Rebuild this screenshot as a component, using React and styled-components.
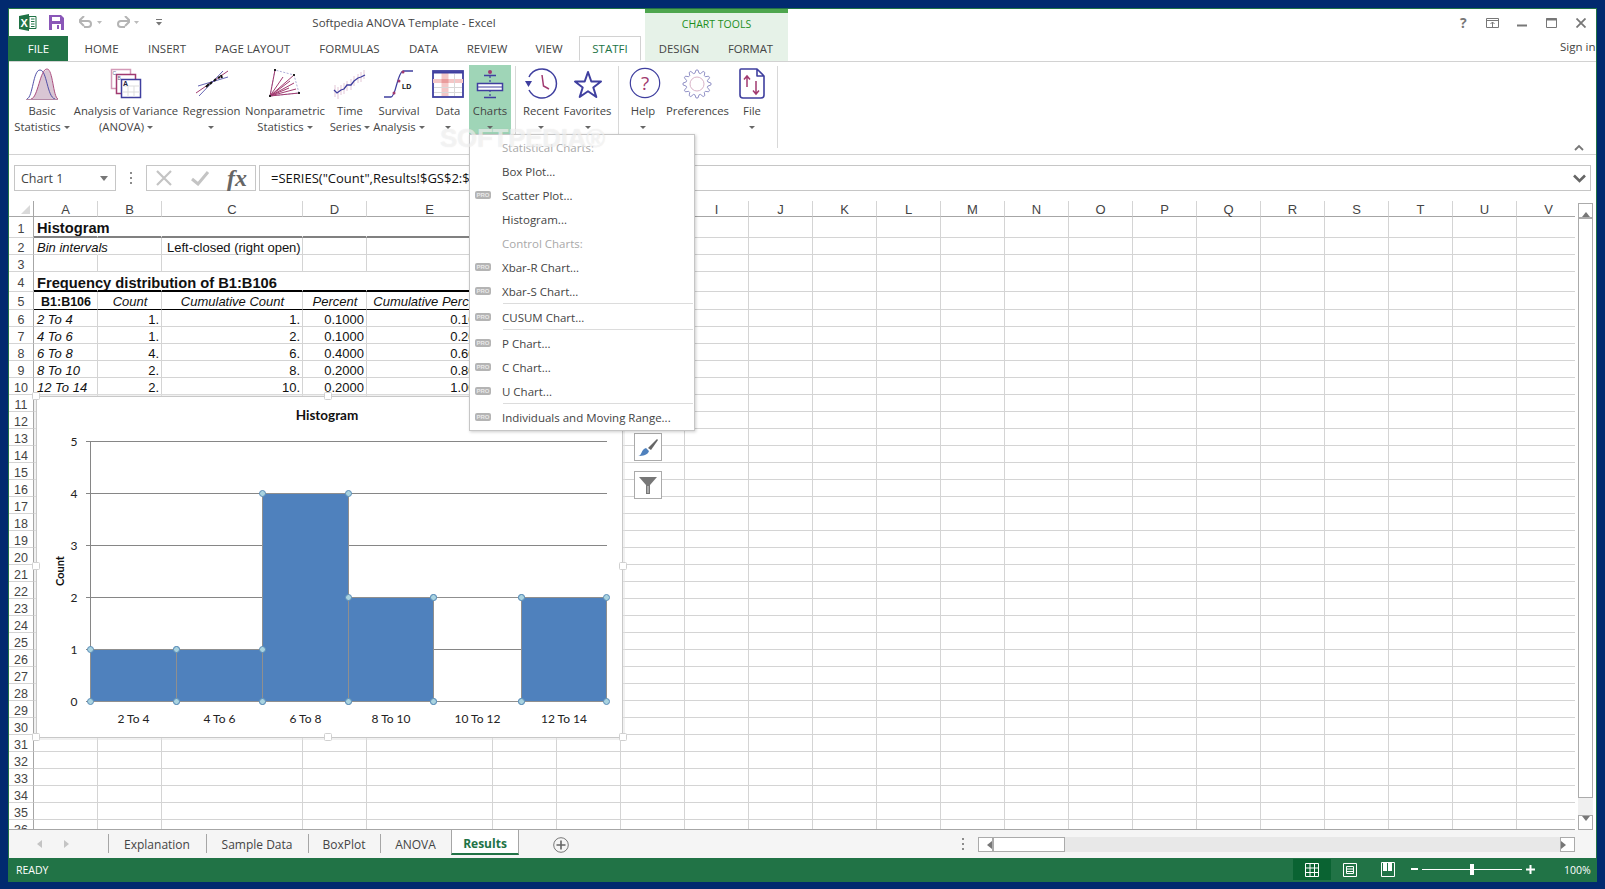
import React from "react";
import styled, { createGlobalStyle } from "styled-components";

const UI_FONT = `"Open Sans", "Noto Sans", sans-serif`;
const CELL_FONT = `"Liberation Sans", Arial, sans-serif`;
const BLUE = "#3f3f9f";
const MAGENTA = "#a13a70";
const GREEN = "#217346";
const GRID = "#d4d4d4";

const GlobalStyle = createGlobalStyle`
	html, body {
		margin: 0;
		background: #012a6f;
		overflow: hidden;
	}
	* {
		box-sizing: border-box;
	}
`;

const Page = styled.div`
	position: relative;
	width: 1605px;
	height: 889px;
	padding: 8px;
	font-family: ${UI_FONT};
`;

const Window = styled.div`
	position: relative;
	width: 1589px;
	height: 874px;
	border: 1px solid ${GREEN};
	background: #fff;
	display: flex;
	flex-direction: column;
	overflow: hidden;
`;

/* ---------- title bar and tabs ---------- */

const Header = styled.header`
	display: flex;
	height: 53px;
	border-bottom: 1px solid #d2d2d2;
`;

const HeaderLeft = styled.div`
	width: 636px;
	display: flex;
	flex-direction: column;
`;

const TitleRow = styled.div`
	height: 28px;
	display: flex;
	align-items: center;
	padding-left: 10px;
`;

const Qat = styled.div`
	width: 290px;
	display: flex;
	align-items: center;
`;

const WindowTitle = styled.div`
	width: 190px;
	text-align: center;
	font-size: 11.5px;
	color: #444;
	white-space: nowrap;
`;

const TabRow = styled.nav`
	height: 25px;
	display: flex;
`;

const RibbonTab = styled.div`
	width: ${(p) => p.$w}px;
	height: ${(p) => (p.$active || p.$file ? 25 : 24)}px;
	display: flex;
	align-items: center;
	justify-content: center;
	font-size: 11.5px;
	white-space: nowrap;
	color: ${(p) => (p.$file ? "#fff" : p.$active ? GREEN : "#444")};
	background: ${(p) => (p.$file ? GREEN : "#fff")};
	margin-left: ${(p) => (p.$active ? 1 : 0)}px;
	border: ${(p) => (p.$active ? "1px solid #d2d2d2" : "none")};
	border-bottom: ${(p) => (p.$active ? "1px solid #fff" : "none")};
	position: relative;
	z-index: 1;
`;

const ChartTools = styled.div`
	width: 143px;
	height: 52px;
	background: #e6f2e8;
	border-top: 4px solid #4ea64e;
	display: flex;
	flex-direction: column;
`;

const ChartToolsTitle = styled.div`
	height: 22px;
	display: flex;
	align-items: center;
	justify-content: center;
	font-size: 10.5px;
	color: #1d8f1d;
`;

const ChartToolsTabs = styled.div`
	flex: 1;
	display: flex;
`;

const ToolTab = styled.div`
	width: ${(p) => p.$w}px;
	display: flex;
	align-items: center;
	justify-content: center;
	font-size: 11.3px;
	color: #444;
`;

const HeaderRight = styled.div`
	flex: 1;
	display: flex;
	flex-direction: column;
	align-items: flex-end;
	overflow: hidden;
`;

const WinControls = styled.div`
	height: 28px;
	display: flex;
	align-items: center;
`;

const WinButton = styled.div`
	width: 29.5px;
	display: flex;
	align-items: center;
	justify-content: center;
	font-size: 14px;
	font-weight: 700;
	color: #777;
`;

const SignIn = styled.div`
	width: 36px;
	height: 25px;
	line-height: 22px;
	font-size: 11.5px;
	color: #444;
	white-space: nowrap;
	overflow: hidden;
`;

/* ---------- ribbon ---------- */

const Ribbon = styled.section`
	height: 93px;
	border-bottom: 1px solid #d2d2d2;
	display: flex;
	padding-left: 5px;
`;

const RibbonItem = styled.div`
	width: ${(p) => p.$w}px;
	height: 72px;
	margin-top: 3px;
	padding-top: 3px;
	display: flex;
	flex-direction: column;
	align-items: center;
	background: ${(p) => (p.$on ? "#9fd5b7" : "transparent")};
`;

const IconBox = styled.div`
	height: 35px;
	width: 32px;
	flex: none;
`;

const ItemLabel = styled.div`
	font-size: 11.3px;
	line-height: 16px;
	color: #444;
	text-align: center;
	white-space: nowrap;
`;

const LabelLine = styled.div`
	height: 16px;
	display: flex;
	align-items: center;
	justify-content: center;
`;

const Caret = styled.i`
	display: inline-block;
	width: 0;
	height: 0;
	margin-left: ${(p) => (p.$solo ? 0 : 3)}px;
	border-left: 3px solid transparent;
	border-right: 3px solid transparent;
	border-top: 3.500px solid #666;
`;

const RibbonSep = styled.div`
	width: 1px;
	height: 82px;
	margin: 4px ${(p) => p.$right}px 0 ${(p) => p.$left}px;
	background: #d8d8d8;
`;

const Collapse = styled.div`
	margin-left: auto;
	margin-right: 8px;
	align-self: flex-end;
	height: 20px;
	width: 14px;
`;

/* ---------- formula bar ---------- */

const FormulaRow = styled.div`
	height: 46px;
	display: flex;
	align-items: flex-start;
	padding: 10px 5px 0 5px;
`;

const NameBox = styled.div`
	width: 102px;
	height: 26px;
	border: 1px solid #c6c6c6;
	display: flex;
	align-items: center;
	justify-content: space-between;
	padding: 0 7px 0 6px;
	font-size: 12.5px;
	color: #444;
`;

const NameArrow = styled.i`
	width: 0;
	height: 0;
	border-left: 4px solid transparent;
	border-right: 4px solid transparent;
	border-top: 5px solid #777;
`;

const Grip = styled.div`
	width: 30px;
	height: 26px;
	display: flex;
	flex-direction: column;
	align-items: center;
	justify-content: center;
	gap: 3px;
`;

const GripDot = styled.i`
	width: 2px;
	height: 2px;
	background: #8c8c8c;
`;

const FxBox = styled.div`
	width: 110px;
	height: 26px;
	border: 1px solid #c6c6c6;
	display: flex;
	align-items: center;
	justify-content: space-between;
	padding: 0 8px;
	margin-right: 3px;
`;

const FxLabel = styled.span`
	font-family: "Liberation Serif", serif;
	font-style: italic;
	font-weight: 700;
	font-size: 24px;
	color: #666;
`;

const FormulaInput = styled.div`
	flex: 1;
	height: 26px;
	border: 1px solid #c6c6c6;
	display: flex;
	align-items: center;
	justify-content: space-between;
	padding: 0 4px 0 11px;
	font-size: 13px;
	color: #111;
	white-space: nowrap;
`;

/* ---------- sheet ---------- */

const SheetArea = styled.div`
	position: relative;
	height: 629px;
	display: flex;
`;

const SheetGrid = styled.div`
	width: 1566px;
	height: 629px;
	overflow: hidden;
	border-bottom: 1px solid #a6a6a6;
`;

const COLUMNS = "25px 64px 64px 141px 64px 126px repeat(17, 64px)";

const ColHeaderRow = styled.div`
	display: grid;
	grid-template-columns: ${COLUMNS};
	grid-template-rows: 16px;
	height: 16px;
`;

const Corner = styled.div`
	border-right: 1px solid #a6a6a6;
	border-bottom: 1px solid #a6a6a6;
	display: flex;
	justify-content: flex-end;
	align-items: flex-end;
	padding: 0 3px 2px 0;
`;

const CornerMark = styled.i`
	width: 9px;
	height: 9px;
	background: #d9d9d9;
	clip-path: polygon(100% 0, 100% 100%, 0 100%);
`;

const ColHeader = styled.div`
	border-right: 1px solid ${GRID};
	border-bottom: 1px solid #a6a6a6;
	text-align: center;
	font-family: ${CELL_FONT};
	font-size: 13px;
	line-height: 17px;
	color: #444;
`;

const SheetRow = styled.div`
	display: grid;
	grid-template-columns: ${COLUMNS};
	grid-template-rows: ${(p) => p.$h}px;
	height: ${(p) => p.$h}px;
`;

const RowHeader = styled.div`
	border-right: 1px solid #a6a6a6;
	border-bottom: 1px solid ${GRID};
	text-align: center;
	font-family: ${CELL_FONT};
	font-size: 12.5px;
	line-height: ${(p) => p.$h + 3}px;
	color: #444;
`;

const UNDER = {
	gray: "2px solid #808080",
	heavy: "2px solid #000",
	thin: "1px solid #000",
};

const Cell = styled.div`
	min-width: 0;
	padding: 0 2px 0 ${(p) => p.$pad || 3}px;
	border-right: 1px solid ${(p) => (p.$open ? "transparent" : GRID)};
	border-bottom: ${(p) => UNDER[p.$under] || `1px solid ${GRID}`};
	font-family: ${CELL_FONT};
	font-size: ${(p) => p.$size || 13}px;
	font-weight: ${(p) => (p.$bold ? 700 : 400)};
	font-style: ${(p) => (p.$italic ? "italic" : "normal")};
	text-align: ${(p) => p.$align || "left"};
	line-height: ${(p) => p.$h + 2}px;
	color: #111;
	white-space: nowrap;
`;

const VScroll = styled.div`
	width: 21px;
	height: 629px;
	padding: 2px 3px 0 3px;
	display: flex;
	flex-direction: column;
	align-items: stretch;
`;

const ScrollTrack = styled.div`
	flex: 1;
	display: flex;
	flex-direction: column;
	background: #f0f0f0;
`;

const ScrollBtn = styled.div`
	width: ${(p) => p.$w || 15}px;
	height: ${(p) => p.$h || 15}px;
	flex: none;
	background: #fff;
	border: 1px solid #ababab;
	display: flex;
	align-items: center;
	justify-content: center;
`;

const Thumb = styled.div`
	height: ${(p) => p.$h}px;
	flex: none;
	background: #fff;
	border: 1px solid #ababab;
`;

const Spacer = styled.div`
	flex: 1;
`;

const Tri = styled.i`
	width: 0;
	height: 0;
	border: 4px solid transparent;
	${(p) => `border-${p.$side}: 5px solid ${p.$color || "#777"};`}
	${(p) => `margin-${p.$side}: -4px;`}
`;

/* ---------- overlays ---------- */

const ChartFrame = styled.svg`
	position: absolute;
	left: 26px;
	top: 193px;
	overflow: visible;
`;

const ChartSideBtn = styled.div`
	position: absolute;
	left: 625px;
	top: ${(p) => p.$top}px;
	width: 28px;
	height: 28px;
	background: #fff;
	border: 1px solid #ababab;
	display: flex;
	align-items: center;
	justify-content: center;
`;

const Menu = styled.div`
	position: absolute;
	left: 469px;
	top: 134px;
	width: 226px;
	height: 297px;
	background: #fff;
	border: 1px solid #c6c6c6;
	box-shadow: 1px 1px 3px rgba(0, 0, 0, 0.2);
	z-index: 5;
	font-size: 11.5px;
`;

const MenuItem = styled.div`
	height: 24px;
	display: flex;
	align-items: center;
	color: ${(p) => (p.$off ? "#a9a9a9" : "#444")};
	white-space: nowrap;
`;

const BadgeSlot = styled.div`
	width: 32px;
	flex: none;
	padding-left: 5px;
`;

const ProBadge = styled.span`
	display: block;
	width: 16px;
	height: 8px;
	line-height: 8px;
	border-radius: 2px;
	background: #b4b4b4;
	color: #e8e8e8;
	font-family: ${CELL_FONT};
	font-size: 6px;
	font-weight: 700;
	text-align: center;
`;

const MenuSep = styled.div`
	height: 2px;
	margin-left: 33px;
	margin-right: 1px;
	border-top: 1px solid #dcdcdc;
`;

const Watermark = styled.div`
	position: absolute;
	left: 440px;
	top: 123px;
	z-index: 6;
	font-family: ${CELL_FONT};
	font-size: 26px;
	font-weight: 700;
	letter-spacing: -0.3px;
	color: rgba(255, 255, 255, 0.5);
	text-shadow: 0 0 1px rgba(190, 190, 190, 0.4);
	pointer-events: none;
`;

/* ---------- sheet tabs ---------- */

const TabBar = styled.div`
	height: 28px;
	background: #f5f5f5;
	display: flex;
	align-items: flex-start;
	padding-right: 21px;
`;

const TabNav = styled.div`
	width: 99px;
	height: 28px;
	display: flex;
	align-items: center;
	padding-left: 24px;
	gap: 30px;
`;

const SheetTab = styled.div`
	position: relative;
	width: ${(p) => p.$w}px;
	height: 25px;
	padding-top: 3px;
	display: flex;
	align-items: center;
	justify-content: center;
	font-size: 12px;
	color: #444;
	white-space: nowrap;
	${(p) =>
		p.$active
			? `background:#fff;color:${GREEN};font-weight:700;border:1px solid #a6a6a6;border-top:none;border-bottom:2px solid ${GREEN};`
			: ""}
	${(p) =>
		p.$divider
			? `&::before{content:"";position:absolute;left:0;top:4px;height:19px;width:1px;background:#a6a6a6;}`
			: ""}
`;

const AddSheet = styled.div`
	margin: 6px 0 0 34px;
	width: 16px;
	height: 16px;
`;

const TabGrip = styled.div`
	margin: 0 14px 0 auto;
	height: 28px;
	display: flex;
	flex-direction: column;
	justify-content: center;
	gap: 3px;
`;

const HScroll = styled.div`
	margin-top: 7px;
	width: 597px;
	height: 15px;
	display: flex;
	background: #e8e8e8;
`;

/* ---------- status bar ---------- */

const StatusBar = styled.footer`
	height: 23px;
	background: ${GREEN};
	display: flex;
	align-items: center;
	padding-left: 7px;
	color: #fff;
	font-size: 10.5px;
`;

const StatusViews = styled.div`
	margin-left: auto;
	display: flex;
	align-items: center;
`;

const ViewBtn = styled.div`
	width: 38px;
	height: 21px;
	display: flex;
	align-items: center;
	justify-content: center;
	background: ${(p) => (p.$on ? "#0a6332" : "transparent")};
`;

const Zoomer = styled.div`
	display: flex;
	align-items: center;
	margin-left: 4px;
	gap: 4px;
`;

const SliderTrack = styled.div`
	position: relative;
	width: 100px;
	height: 1px;
	background: #fff;
`;

const SliderThumb = styled.i`
	position: absolute;
	left: 48px;
	top: -5px;
	width: 4px;
	height: 11px;
	background: #fff;
`;

const ZoomText = styled.div`
	width: 45px;
	padding-left: 13px;
	margin-left: 16px;
	white-space: nowrap;
`;

/* ---------- drawn icons ---------- */

const XlIcon = () => (
	<svg width="18" height="17" viewBox="0 0 18 17">
		<path d="M0 2 L10 0 V17 L0 15 Z" fill="#1f7244" />
		<path d="M10 2.5 H17 V14.5 H10 Z" fill="#fff" stroke="#1f7244" />
		<path d="M12 5 H15.5 M12 7.5 H15.5 M12 10 H15.5 M12 12.5 H15.5" stroke="#1f7244" />
		<text x="1.5" y="13" fontFamily="Liberation Sans" fontWeight="700" fontSize="11" fill="#fff">X</text>
	</svg>
);

const SaveIcon = () => (
	<svg width="15" height="15" viewBox="0 0 15 15" style={{ marginLeft: 12 }}>
		<path d="M0 0 H12 L15 3 V15 H0 Z" fill="#8a57b8" />
		<rect x="3" y="2" width="8" height="4" fill="#fff" />
		<rect x="3" y="9" width="9" height="6" fill="#fff" />
		<rect x="8" y="10" width="2" height="4" fill="#8a57b8" />
	</svg>
);

const UndoIcon = ({ flip }) => (
	<svg width="14" height="13" viewBox="0 0 14 13" style={{ transform: flip ? "scaleX(-1)" : "none", marginLeft: flip ? 14 : 15 }}>
		<path d="M1 5 H9 C13 5 13 11 9 11 H5" fill="none" stroke="#b4b4b4" strokeWidth="2" />
		<path d="M5 0 L0 5 L5 10" fill="none" stroke="#b4b4b4" strokeWidth="2" />
	</svg>
);

const TinyCaret = () => (
	<svg width="5" height="3" viewBox="0 0 5 3" style={{ marginLeft: 4 }}>
		<path d="M0 0 H5 L2.5 3 Z" fill="#bbb" />
	</svg>
);

const CustomizeIcon = () => (
	<svg width="6" height="7" viewBox="0 0 6 7" style={{ marginLeft: 17 }}>
		<path d="M0 0.500 H6" stroke="#777" />
		<path d="M0 3 H6 L3 6.500 Z" fill="#777" />
	</svg>
);

const IconSvg = ({ children, nudge }) => (
	<svg width="32" height="32" viewBox="0 0 32 32" style={{ overflow: "visible", marginLeft: nudge || 0 }}>
		{children}
	</svg>
);

const BasicIcon = () => (
	<IconSvg>
		<path d="M5 31 C12 30 14 2 21 2 C27 2 27 29 32 31 Z" fill="#d9c6d4" />
		<path d="M1 31 C7 29 7 2 14 2 C21 2 21 29 29 31" fill="none" stroke={BLUE} strokeWidth="0.900" />
		<path d="M5 31 C12 30 14 1 21 1 C27 1 27 29 32 31" fill="none" stroke={MAGENTA} strokeWidth="0.900" />
		<path d="M0 31.500 H32" stroke="#b48aa6" />
	</IconSvg>
);

const SheetsIcon = () => (
	<IconSvg>
		<rect x="1.500" y="1.500" width="19" height="19" fill="#fff" stroke="#d49ab8" strokeWidth="1.500" />
		<rect x="6.500" y="6.500" width="19" height="19" fill="#fff" stroke={MAGENTA} strokeWidth="1.500" />
		<rect x="11.500" y="11.500" width="19" height="18" fill="#fff" stroke={BLUE} strokeWidth="1.500" />
		<path d="M12 18 H30 M12 24 H30 M18 18 V29 M24 18 V29" stroke="#ddd" />
		<text x="13" y="18" fontFamily="Liberation Sans" fontWeight="700" fontSize="7" fill="#224">A</text>
		<text x="2.500" y="7" fontFamily="Liberation Sans" fontSize="5" fill="#668">C</text>
		<text x="7.500" y="12" fontFamily="Liberation Sans" fontSize="5" fill="#668">B</text>
	</IconSvg>
);

const RegressionIcon = () => (
	<IconSvg>
		<path d="M0 25 L32 3" stroke={MAGENTA} />
		<path d="M2 18 L32 9 M3 28 L27 3" stroke={BLUE} strokeWidth="0.800" />
		<path d="M10 19 L13 16 M14 16 L16 14 M18 13 L20 11 M22 10 L24 9 M25 7 L26 10" stroke="#111" strokeWidth="2" />
	</IconSvg>
);

const NonparamIcon = () => (
	<IconSvg>
		<path d="M1 28 L6 2 L25 7 L30 25 Z" fill="none" stroke="#8c8cc8" strokeWidth="0.700" strokeDasharray="2 1.500" />
		<path d="M1 28 L6 2 M1 28 L25 7 M1 28 L21 13 M1 28 L25 15 M1 28 L30 25 M1 28 L20 20 M1 28 L14 9 M1 28 L27 21" fill="none" stroke={MAGENTA} strokeWidth="1" />
		<path d="M5 1 h2 v2 h-2 Z M24 6 h2 v2 h-2 Z M29 24 h2 v2 h-2 Z M0 27 h2 v2 h-2 Z" fill="#222" />
	</IconSvg>
);

const TimeIcon = () => (
	<IconSvg>
		<path d="M1 17 V29 M4 19 V31 M7 17 V27 M10 15 V26 M13 13 V23 M17 11 V22 M20 8 V18 M24 6 V15 M27 4 V14 M30 2 V11" stroke="#e3c6d6" />
		<path d="M0 22 L3 25 L7 22 L10 21 L13 17 L17 17 L20 13 L24 10 L27 9 L31 7" fill="none" stroke={BLUE} strokeWidth="1.300" />
	</IconSvg>
);

const SurvivalIcon = () => (
	<IconSvg>
		<path d="M1 29 H8 C13 29 14 5 20 3 H30" fill="none" stroke={BLUE} strokeWidth="1.300" />
		<circle cx="11" cy="25" r="1.500" fill={MAGENTA} />
		<circle cx="16" cy="13" r="1.500" fill={MAGENTA} />
		<circle cx="20" cy="4" r="1.500" fill={MAGENTA} />
		<text x="19" y="21" fontFamily="Liberation Sans" fontWeight="700" fontSize="7" fill="#111">LD</text>
	</IconSvg>
);

const DataIcon = () => (
	<IconSvg>
		<rect x="1" y="3" width="30" height="26" fill="#fff" stroke={BLUE} strokeWidth="1.800" />
		<rect x="1" y="11" width="30" height="4" fill="#f4c7c7" />
		<rect x="9.500" y="5" width="7" height="23" fill="#f4c7c7" />
		<rect x="9.500" y="11" width="7" height="4" fill="#ea9c9c" />
		<path d="M2 19.500 H30 M2 24.500 H30 M22.500 6 V28" stroke="#d8d8d8" />
		<path d="M1 4.500 H31" stroke={BLUE} strokeWidth="2" />
	</IconSvg>
);

const ChartsIcon = () => (
	<IconSvg>
		<circle cx="16" cy="4" r="2" fill={MAGENTA} />
		<path d="M10 7.500 H22 M10 29.500 H22" stroke={BLUE} strokeWidth="1.500" />
		<path d="M16 8 V15 M16 22 V29" stroke={BLUE} strokeWidth="1.200" strokeDasharray="2 2" />
		<rect x="3.500" y="15.500" width="25" height="7" fill="#fff" stroke={BLUE} strokeWidth="1.500" />
		<path d="M4 19 H28" stroke={BLUE} strokeWidth="1" />
	</IconSvg>
);

const RecentIcon = () => (
	<IconSvg nudge={1}>
		<path d="M3 9 A14.500 14.500 0 1 1 3 22" fill="none" stroke={BLUE} strokeWidth="1.500" />
		<path d="M-1 13 H6 L2.500 19 Z" fill={BLUE} />
		<path d="M16 7 L17.500 18 L23 21" fill="none" stroke={MAGENTA} strokeWidth="1.500" />
	</IconSvg>
);

const StarIcon = () => (
	<IconSvg>
		<path d="M16 4 L19.300 13.500 L29 13.500 L21.300 19.500 L24.300 29 L16 23.300 L7.700 29 L10.700 19.500 L3 13.500 L12.700 13.500 Z" fill="#fff" stroke={BLUE} strokeWidth="2" strokeLinejoin="round" />
	</IconSvg>
);

const HelpIcon = () => (
	<IconSvg nudge={2}>
		<circle cx="16" cy="15" r="14.700" fill="#fff" stroke={BLUE} strokeWidth="1.200" />
		<text x="16" y="22" textAnchor="middle" fontFamily="Open Sans" fontSize="19" fill={MAGENTA}>?</text>
	</IconSvg>
);

const gearPoints = Array.from({ length: 48 }, (_, i) => {
	const step = i % 4;
	const r = step < 2 ? 14 : 11;
	const a = ((i - 0.5) * Math.PI * 2) / 48;
	return `${(16 + r * Math.cos(a)).toFixed(1)},${(16 + r * Math.sin(a)).toFixed(1)}`;
}).join(" ");

const GearIcon = () => (
	<IconSvg nudge={-1}>
		<polygon points={gearPoints} fill="#fff" stroke="#7676b8" strokeWidth="0.800" />
		<circle cx="16" cy="16" r="7" fill="#fff" stroke="#d9b4c8" />
	</IconSvg>
);

const FileIcon = () => (
	<IconSvg>
		<path d="M5 1 H21 L28 8 V27 Q28 30 25 30 H7 Q4 30 4 27 V2 Q4 1 5 1 Z M21 1 V8 H28" fill="#fff" stroke={BLUE} strokeWidth="1.600" strokeLinejoin="round" />
		<path d="M11 8 V19 M8 11.500 L11 8 L14 11.500" fill="none" stroke={MAGENTA} strokeWidth="1.500" />
		<path d="M20 13 V26 M17 22.500 L20 26 L23 22.500" fill="none" stroke={MAGENTA} strokeWidth="1.500" />
	</IconSvg>
);

const ribbonItems = [
	{ key: "basic", w: 56, icon: <BasicIcon />, lines: ["Basic", "Statistics"] },
	{ key: "anova", w: 112, icon: <SheetsIcon />, lines: ["Analysis of Variance", "(ANOVA)"] },
	{ key: "regr", w: 59, icon: <RegressionIcon />, lines: ["Regression", ""] },
	{ key: "nonp", w: 88, icon: <NonparamIcon />, lines: ["Nonparametric", "Statistics"] },
	{ key: "time", w: 42, icon: <TimeIcon />, lines: ["Time", "Series"] },
	{ key: "surv", w: 56, icon: <SurvivalIcon />, lines: ["Survival", "Analysis"] },
	{ key: "data", w: 42, icon: <DataIcon />, lines: ["Data", ""] },
	{ key: "charts", w: 42, icon: <ChartsIcon />, lines: ["Charts", ""], on: true },
	{ sep: [4, 4] },
	{ key: "recent", w: 42, icon: <RecentIcon />, lines: ["Recent", ""] },
	{ key: "fav", w: 51, icon: <StarIcon />, lines: ["Favorites", ""] },
	{ sep: [5, 4] },
	{ key: "help", w: 40, icon: <HelpIcon />, lines: ["Help", ""] },
	{ key: "prefs", w: 69, icon: <GearIcon />, lines: ["Preferences"], noCaret: true },
	{ key: "file", w: 40, icon: <FileIcon />, lines: ["File", ""] },
	{ sep: [5, 0] },
];

const tabs = [
	{ name: "HOME", w: 67 },
	{ name: "INSERT", w: 64 },
	{ name: "PAGE LAYOUT", w: 107 },
	{ name: "FORMULAS", w: 87 },
	{ name: "DATA", w: 61 },
	{ name: "REVIEW", w: 66 },
	{ name: "VIEW", w: 58 },
];

const menuEntries = [
	{ text: "Statistical Charts:", off: true },
	{ text: "Box Plot..." },
	{ text: "Scatter Plot...", pro: true },
	{ text: "Histogram..." },
	{ text: "Control Charts:", off: true },
	{ text: "Xbar-R Chart...", pro: true },
	{ text: "Xbar-S Chart...", pro: true },
	{ sep: true },
	{ text: "CUSUM Chart...", pro: true },
	{ sep: true },
	{ text: "P Chart...", pro: true },
	{ text: "C Chart...", pro: true },
	{ text: "U Chart...", pro: true },
	{ sep: true },
	{ text: "Individuals and Moving Range...", pro: true },
];

const sheetTabs = [
	{ name: "Explanation", w: 98, divider: true },
	{ name: "Sample Data", w: 102, divider: true },
	{ name: "BoxPlot", w: 72, divider: true },
	{ name: "ANOVA", w: 71, divider: true },
	{ name: "Results", w: 68, active: true },
];

const colNames = "ABCDEFGHIJKLMNOPQRSTUV".split("");

const dataRow = (a, b, c, d, e) => ({
	h: 17,
	cells: [
		{ text: a, italic: true },
		{ text: b, align: "right" },
		{ text: c, align: "right" },
		{ text: d, align: "right" },
		{ text: e, align: "right" },
	],
});

const specialRows = {
	1: {
		h: 21,
		cells: [
			{ text: "Histogram", bold: true, size: 14.7, open: true, under: "gray" },
			{ open: true, under: "gray" },
			{ open: true, under: "gray" },
			{ open: true, under: "gray" },
			{ open: true, under: "gray" },
		],
	},
	2: {
		h: 17,
		cells: [{ text: "Bin intervals", italic: true, open: true }, {}, { text: "Left-closed (right open)", pad: 5 }, {}, {}],
	},
	4: {
		h: 20,
		cells: [
			{ text: "Frequency distribution of B1:B106", bold: true, size: 14.7, open: true, under: "heavy" },
			{ open: true, under: "heavy" },
			{ open: true, under: "heavy" },
			{ open: true, under: "heavy" },
			{ under: "heavy" },
		],
	},
	5: {
		h: 18,
		cells: [
			{ text: "B1:B106", bold: true, size: 12.5, align: "center", under: "thin" },
			{ text: "Count", italic: true, align: "center", under: "thin" },
			{ text: "Cumulative Count", italic: true, align: "center", under: "thin" },
			{ text: "Percent", italic: true, align: "center", under: "thin" },
			{ text: "Cumulative Percent", italic: true, align: "center", under: "thin" },
		],
	},
	6: dataRow("2 To 4", "1.", "1.", "0.1000", "0.1000"),
	7: dataRow("4 To 6", "1.", "2.", "0.1000", "0.2000"),
	8: dataRow("6 To 8", "4.", "6.", "0.4000", "0.6000"),
	9: dataRow("8 To 10", "2.", "8.", "0.2000", "0.8000"),
	10: dataRow("12 To 14", "2.", "10.", "0.2000", "1.0000"),
};

const sheetRows = Array.from({ length: 36 }, (_, i) => specialRows[i + 1] || { h: 17, cells: [] });

const axisY = [701.5, 649.5, 597.5, 545.5, 493.5, 441.5];
const bars = [
	{ x0: 90.5, x1: 176.5, top: 649.5, label: "2 To 4" },
	{ x0: 176.5, x1: 262.5, top: 649.5, label: "4 To 6" },
	{ x0: 262.5, x1: 348.5, top: 493.5, label: "6 To 8" },
	{ x0: 348.5, x1: 433.5, top: 597.5, label: "8 To 10" },
	{ x0: 433.5, x1: 521.5, top: 597.5, label: "10 To 12", empty: true },
	{ x0: 521.5, x1: 606.5, top: 597.5, label: "12 To 14" },
];

const FrameHandle = ({ x, y }) => (
	<rect x={x - 3.500} y={y - 3.500} width="7" height="7" rx="1" fill="#fff" stroke="#d0d0d0" />
);

const PointHandle = ({ x, y }) => (
	<circle cx={x} cy={y} r="3" fill="#a9d3e0" stroke="#5b8db8" />
);

// chart is drawn in page coordinates and shifted into its frame
const HistogramChart = () => (
	<ChartFrame width="600" height="350" viewBox="35 394 600 350">
		<rect x="36.500" y="396.500" width="586" height="341" fill="#fff" stroke="#c8c8c8" />
		<rect x="35" y="395" width="589" height="344" fill="none" stroke="#e2e2e2" />
		<text x="327" y="420" textAnchor="middle" fontFamily="Lato" fontWeight="700" fontSize="13.500" fill="#111">Histogram</text>
		<text transform="translate(64 571) rotate(-90)" textAnchor="middle" fontFamily="Lato" fontWeight="700" fontSize="11" fill="#111">Count</text>
		{axisY.map((y, i) => (
			<g key={y}>
				<path d={`M86 ${y} H607`} stroke="#868686" />
				<text x="74" y={y + 4} textAnchor="middle" fontFamily="Lato" fontSize="12" fill="#222">{i}</text>
			</g>
		))}
		<path d="M90.500 441 V702" stroke="#868686" />
		{bars.map((b) => (
			<g key={b.label}>
				<rect x={b.x0} y={b.top} width={b.x1 - b.x0} height={701.5 - b.top} fill={b.empty ? "none" : "#4f81bd"} stroke="#8f8f8f" />
				<text x={(b.x0 + b.x1) / 2} y="723" textAnchor="middle" fontFamily="Lato" fontSize="12" fill="#222">{b.label}</text>
			</g>
		))}
		{bars.map((b) => (
			<g key={b.label + "-pts"}>
				<PointHandle x={b.x0} y={b.top} />
				<PointHandle x={b.x1} y={b.top} />
				<PointHandle x={b.x0} y={701.5} />
				<PointHandle x={b.x1} y={701.5} />
			</g>
		))}
		<FrameHandle x={36} y={396} />
		<FrameHandle x={328} y={396} />
		<FrameHandle x={36} y={566} />
		<FrameHandle x={623} y={566} />
		<FrameHandle x={36} y={737} />
		<FrameHandle x={328} y={737} />
		<FrameHandle x={623} y={737} />
	</ChartFrame>
);

function App() {
	return (
		<Page>
			<GlobalStyle />
			<Window>
				<Header>
					<HeaderLeft>
						<TitleRow>
							<Qat>
								<XlIcon />
								<SaveIcon />
								<UndoIcon />
								<TinyCaret />
								<UndoIcon flip />
								<TinyCaret />
								<CustomizeIcon />
							</Qat>
							<WindowTitle>Softpedia ANOVA Template - Excel</WindowTitle>
						</TitleRow>
						<TabRow>
							<RibbonTab $w={59} $file>FILE</RibbonTab>
							{tabs.map((t) => (
								<RibbonTab key={t.name} $w={t.w}>{t.name}</RibbonTab>
							))}
							<RibbonTab $w={62} $active>STATFI</RibbonTab>
						</TabRow>
					</HeaderLeft>
					<ChartTools>
						<ChartToolsTitle>CHART TOOLS</ChartToolsTitle>
						<ChartToolsTabs>
							<ToolTab $w={68}>DESIGN</ToolTab>
							<ToolTab $w={75}>FORMAT</ToolTab>
						</ChartToolsTabs>
					</ChartTools>
					<HeaderRight>
						<WinControls>
							<WinButton>?</WinButton>
							<WinButton>
								<svg width="13" height="10" viewBox="0 0 13 10">
									<path d="M0.500 0.500 H12.500 V9.500 H0.500 Z M1 2.500 H12" fill="none" stroke="#777" />
									<path d="M6.500 9 V4 M4.500 6 L6.500 4 L8.500 6" fill="none" stroke="#777" />
								</svg>
							</WinButton>
							<WinButton>
								<svg width="10" height="10" viewBox="0 0 10 10">
									<path d="M0 7.500 H10" stroke="#777" strokeWidth="2" />
								</svg>
							</WinButton>
							<WinButton>
								<svg width="11" height="10" viewBox="0 0 11 10">
									<path d="M0.500 0.500 H10.500 V9.500 H0.500 Z" fill="none" stroke="#777" />
									<path d="M0 1.500 H11" stroke="#777" strokeWidth="2" />
								</svg>
							</WinButton>
							<WinButton>
								<svg width="10" height="10" viewBox="0 0 10 10">
									<path d="M0.500 0.500 L9.500 9.500 M9.500 0.500 L0.500 9.500" stroke="#777" strokeWidth="1.800" />
								</svg>
							</WinButton>
						</WinControls>
						<SignIn>Sign in</SignIn>
					</HeaderRight>
				</Header>

				<Ribbon>
					{ribbonItems.map((item, i) =>
						item.sep ? (
							<RibbonSep key={i} $left={item.sep[0]} $right={item.sep[1]} />
						) : (
							<RibbonItem key={item.key} $w={item.w} $on={item.on}>
								<IconBox>{item.icon}</IconBox>
								<ItemLabel>
									{item.lines.map((line, n) => (
										<LabelLine key={n}>
											{line}
											{n === item.lines.length - 1 && !item.noCaret && <Caret $solo={!line} />}
										</LabelLine>
									))}
								</ItemLabel>
							</RibbonItem>
						)
					)}
					<Collapse>
						<svg width="10" height="7" viewBox="0 0 10 7">
							<path d="M1 6 L5 2 L9 6" fill="none" stroke="#777" strokeWidth="1.800" />
						</svg>
					</Collapse>
				</Ribbon>

				<FormulaRow>
					<NameBox>
						Chart 1
						<NameArrow />
					</NameBox>
					<Grip>
						<GripDot />
						<GripDot />
						<GripDot />
					</Grip>
					<FxBox>
						<svg width="18" height="16" viewBox="0 0 18 16">
							<path d="M2 1 L16 15 M16 1 L2 15" stroke="#c4c4c4" strokeWidth="2.200" />
						</svg>
						<svg width="20" height="16" viewBox="0 0 20 16">
							<path d="M2 9 L8 14 L18 2" fill="none" stroke="#c4c4c4" strokeWidth="3" />
						</svg>
						<FxLabel>fx</FxLabel>
					</FxBox>
					<FormulaInput>
						=SERIES("Count",Results!$GS$2:$GS$7,Results!$GT$2:$GT$7,1)
						<svg width="13" height="9" viewBox="0 0 13 9">
							<path d="M1 1.500 L6.500 7 L12 1.500" fill="none" stroke="#666" strokeWidth="2.600" />
						</svg>
					</FormulaInput>
				</FormulaRow>

				<SheetArea>
					<SheetGrid>
						<ColHeaderRow>
							<Corner>
								<CornerMark />
							</Corner>
							{colNames.map((c) => (
								<ColHeader key={c}>{c}</ColHeader>
							))}
						</ColHeaderRow>
						{sheetRows.map((row, r) => (
							<SheetRow key={r} $h={row.h}>
								<RowHeader $h={row.h}>{r + 1}</RowHeader>
								{colNames.map((c, n) => {
									const cell = row.cells[n] || {};
									return (
										<Cell
											key={c}
											$h={row.h}
											$bold={cell.bold}
											$italic={cell.italic}
											$align={cell.align}
											$size={cell.size}
											$open={cell.open}
											$under={cell.under}
											$pad={cell.pad}
										>
											{cell.text}
										</Cell>
									);
								})}
							</SheetRow>
						))}
					</SheetGrid>
					<VScroll>
						<ScrollTrack>
							<ScrollBtn>
								<Tri $side="bottom" />
							</ScrollBtn>
							<Thumb $h={580} />
							<Spacer />
							<ScrollBtn>
								<Tri $side="top" />
							</ScrollBtn>
						</ScrollTrack>
					</VScroll>
					<HistogramChart />
					<ChartSideBtn $top={232}>
						<svg width="22" height="20" viewBox="0 0 22 20">
							<path d="M11 11 L20 2 L21 3 L14 13 Z" fill="#666" />
							<path d="M1 19 C5 19 4 12 9 11 L12 14 C11 18 6 19 1 19 Z" fill="#4f81bd" />
						</svg>
					</ChartSideBtn>
					<ChartSideBtn $top={270}>
						<svg width="20" height="20" viewBox="0 0 20 20">
							<path d="M1 2 H19 L12 10 V19 H8 V10 Z" fill="#777" />
							<path d="M9.500 11 V18 H10.500 V11 Z" fill="#ddd" />
						</svg>
					</ChartSideBtn>
				</SheetArea>

				<TabBar>
					<TabNav>
						<Tri $side="right" $color="#c4c4c4" />
						<Tri $side="left" $color="#c4c4c4" />
					</TabNav>
					{sheetTabs.map((t) => (
						<SheetTab key={t.name} $w={t.w} $active={t.active} $divider={t.divider}>
							{t.name}
						</SheetTab>
					))}
					<AddSheet>
						<svg width="16" height="16" viewBox="0 0 16 16">
							<circle cx="8" cy="8" r="7.300" fill="none" stroke="#777" />
							<path d="M8 3.500 V12.500 M3.500 8 H12.500" stroke="#666" strokeWidth="1.600" />
						</svg>
					</AddSheet>
					<TabGrip>
						<GripDot />
						<GripDot />
						<GripDot />
					</TabGrip>
					<HScroll>
						<ScrollBtn>
							<Tri $side="right" />
						</ScrollBtn>
						<ScrollBtn $w={72} />
						<Spacer />
						<ScrollBtn>
							<Tri $side="left" />
						</ScrollBtn>
					</HScroll>
				</TabBar>

				<StatusBar>
					READY
					<StatusViews>
						<ViewBtn $on>
							<svg width="14" height="14" viewBox="0 0 14 14">
								<path d="M0.500 0.500 H13.500 V13.500 H0.500 Z M0.500 5 H13.500 M0.500 9.500 H13.500 M5 0.500 V13.500 M9.500 0.500 V13.500" fill="none" stroke="#fff" />
							</svg>
						</ViewBtn>
						<ViewBtn>
							<svg width="14" height="14" viewBox="0 0 14 14">
								<path d="M0.500 0.500 H13.500 V13.500 H0.500 Z M3.500 3.500 H10.500 V10.500 H3.500 Z M4 6 H10 M4 8.500 H10" fill="none" stroke="#fff" />
							</svg>
						</ViewBtn>
						<ViewBtn>
							<svg width="14" height="15" viewBox="0 0 14 15">
								<path d="M0.500 0.500 H13.500 V14.500 H0.500 Z" fill="none" stroke="#fff" />
								<rect x="2" y="1" width="4" height="8" fill="#fff" />
								<rect x="7" y="1" width="4" height="8" fill="#fff" />
							</svg>
						</ViewBtn>
					</StatusViews>
					<Zoomer>
						<svg width="7" height="3" viewBox="0 0 7 3">
							<rect width="7" height="2" fill="#fff" />
						</svg>
						<SliderTrack>
							<SliderThumb />
						</SliderTrack>
						<svg width="9" height="9" viewBox="0 0 9 9">
							<path d="M4.500 0 V9 M0 4.500 H9" stroke="#fff" strokeWidth="2" />
						</svg>
					</Zoomer>
					<ZoomText>100%</ZoomText>
				</StatusBar>
			</Window>

			<Menu>
				{menuEntries.map((entry, i) =>
					entry.sep ? (
						<MenuSep key={i} />
					) : (
						<MenuItem key={entry.text} $off={entry.off}>
							<BadgeSlot>{entry.pro && <ProBadge>PRO</ProBadge>}</BadgeSlot>
							{entry.text}
						</MenuItem>
					)
				)}
			</Menu>
			<Watermark>SOFTPEDIA®</Watermark>
		</Page>
	);
}

export default App;
